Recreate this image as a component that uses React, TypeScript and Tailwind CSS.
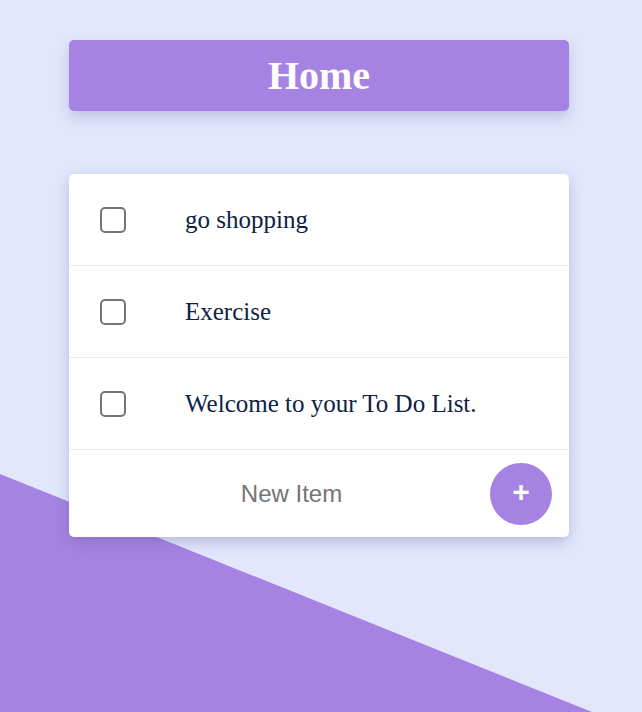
import { useState } from "react";

type Item = { id: number; text: string; done: boolean };

const initial: Item[] = [
  { id: 1, text: "go shopping", done: false },
  { id: 2, text: "Exercise", done: false },
  { id: 3, text: "Welcome to your To Do List.", done: false },
];

export default function App() {
  const [items, setItems] = useState<Item[]>(initial);
  const [draft, setDraft] = useState("");

  const toggle = (id: number) =>
    setItems((list) => list.map((i) => (i.id === id ? { ...i, done: !i.done } : i)));

  const add = () => {
    if (!draft.trim()) return;
    setItems((list) => [...list, { id: Date.now(), text: draft.trim(), done: false }]);
    setDraft("");
  };

  return (
    <div className="relative min-h-[712px] overflow-hidden bg-[#e3e7fc]">
      {/* Background wedge */}
      <svg
        className="absolute inset-0 h-full w-full"
        viewBox="0 0 642 712"
        preserveAspectRatio="none"
        aria-hidden
      >
        <polygon points="0,474 592,712 0,712" fill="#a683e3" />
      </svg>

      <div className="relative flex flex-col items-center pt-10 pr-1">
        {/* Header */}
        <div className="flex h-[71px] w-[500px] items-center justify-center rounded-[5px] bg-[#a683e3] shadow-[0_6px_14px_rgba(80,80,140,0.25)]">
          <h1 className="font-['Liberation_Serif',serif] text-[40px] font-bold text-white">Home</h1>
        </div>

        {/* List */}
        <div className="mt-[63px] w-[500px] rounded-[5px] bg-white shadow-[0_5px_14px_rgba(80,80,140,0.3)]">
          {items.map((item) => (
            <label
              key={item.id}
              className="flex h-[92px] cursor-pointer items-center border-b border-[#eeeeee] pl-[31px]"
            >
              <input
                type="checkbox"
                checked={item.done}
                onChange={() => toggle(item.id)}
                className="peer sr-only"
              />
              <span className="flex h-[26px] w-[26px] items-center justify-center rounded-[5px] border-2 border-[#767676] peer-checked:bg-[#a683e3]" />
              <span className="ml-[59px] font-['Liberation_Serif',serif] text-[25px] text-[#0e2245] peer-checked:line-through">
                {item.text}
              </span>
            </label>
          ))}

          <div className="flex h-[87px] items-center pl-6 pr-[17px]">
            <input
              value={draft}
              onChange={(e) => setDraft(e.target.value)}
              onKeyDown={(e) => e.key === "Enter" && add()}
              placeholder="New Item"
              className="h-12 flex-1 bg-transparent text-center font-['Liberation_Sans',sans-serif] text-[24px] text-[#333] outline-none placeholder:text-[#757575]"
            />
            <button
              onClick={add}
              className="flex h-[62px] w-[62px] items-center justify-center rounded-full bg-[#a683e3] font-['Liberation_Sans',sans-serif] text-[30px] font-bold leading-none text-white"
            >
              <span className="-mt-1">+</span>
            </button>
          </div>
        </div>
      </div>
    </div>
  );
}
